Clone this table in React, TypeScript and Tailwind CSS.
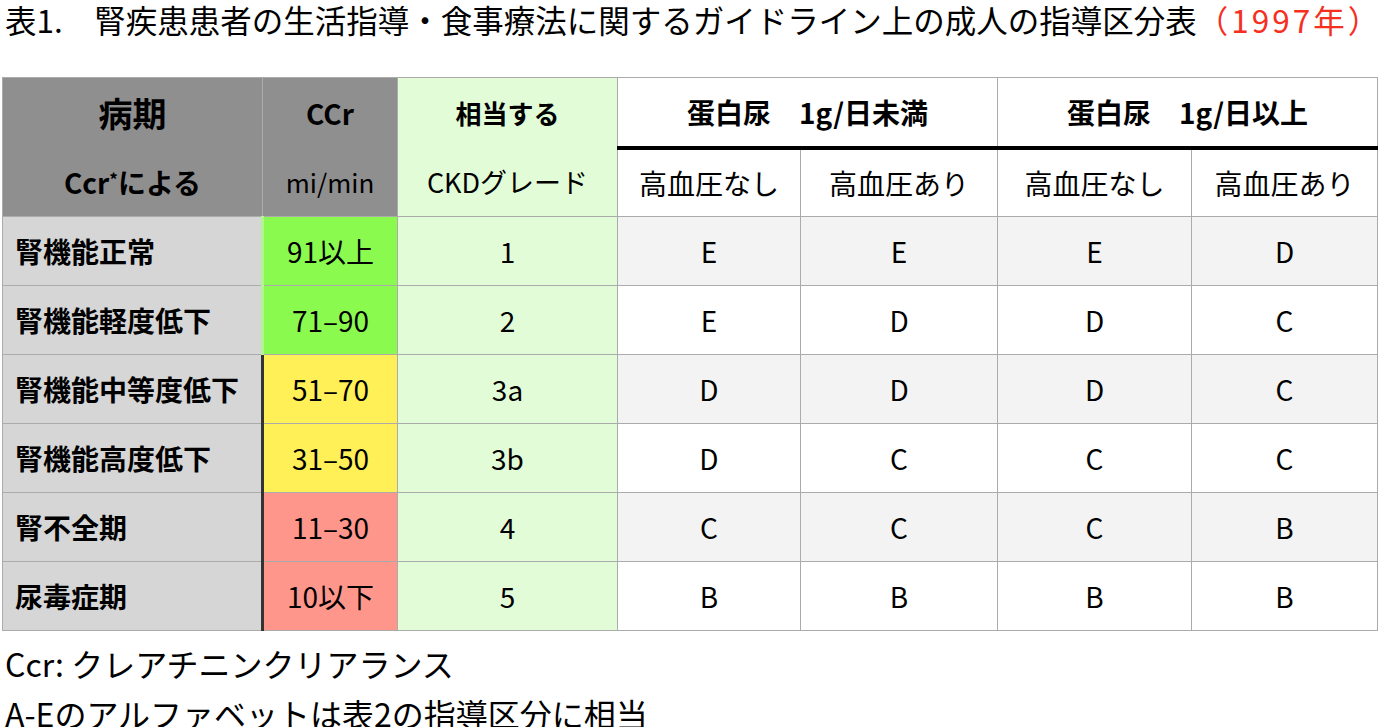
import type { ReactNode } from "react"

// 指導区分の行データ
const rows = [
  { name: "腎機能正常", ccr: "91以上", ckd: "1", grades: ["E", "E", "E", "D"], fill: "bg-[#8bfa4f]", edge: "border-l-[#b2f396]" },
  { name: "腎機能軽度低下", ccr: "71–90", ckd: "2", grades: ["E", "D", "D", "C"], fill: "bg-[#8bfa4f]", edge: "border-l-[#b2f396]" },
  { name: "腎機能中等度低下", ccr: "51–70", ckd: "3a", grades: ["D", "D", "D", "C"], fill: "bg-[#fff057]", edge: "border-l-[#333333]" },
  { name: "腎機能高度低下", ccr: "31–50", ckd: "3b", grades: ["D", "C", "C", "C"], fill: "bg-[#fff057]", edge: "border-l-[#333333]" },
  { name: "腎不全期", ccr: "11–30", ckd: "4", grades: ["C", "C", "C", "B"], fill: "bg-[#ff968b]", edge: "border-l-[#333333]" },
  { name: "尿毒症期", ccr: "10以下", ckd: "5", grades: ["B", "B", "B", "B"], fill: "bg-[#ff968b]", edge: "border-l-[#333333]" },
]

const line = "border border-[#ababab]"

function Cell({ className = "", colSpan, children }: { className?: string; colSpan?: number; children?: ReactNode }) {
  return (
    <td colSpan={colSpan} className={`${line} p-0 text-center align-middle whitespace-nowrap ${className}`}>
      {children}
    </td>
  )
}

export default function App() {
  return (
    <div className="w-[1380px] h-[727px] overflow-hidden bg-white text-black font-['Noto_Sans_CJK_JP',sans-serif]">
      <h1 className="pl-[5px] text-[31.5px] leading-[38px] font-normal whitespace-nowrap">
        表1.　腎疾患患者の生活指導・食事療法に関するガイドライン上の成人の指導区分表
        <span className="text-[#f5301f] tracking-[3px]">（1997年）</span>
      </h1>

      <table className="mt-[39px] ml-[2px] w-[1375px] table-fixed border-collapse text-[28px] leading-none">
        <colgroup>
          <col className="w-[260px]" />
          <col className="w-[135px]" />
          <col className="w-[220px]" />
          <col className="w-[183px]" />
          <col className="w-[197px]" />
          <col className="w-[194px]" />
          <col className="w-[186px]" />
        </colgroup>
        <thead>
          <tr className="h-[70px]">
            <Cell className="border-b-0 bg-[#8f8f8f] text-[34px] font-bold">病期</Cell>
            <Cell className="border-b-0 bg-[#8f8f8f] font-bold">CCr</Cell>
            <Cell className="border-b-0 bg-[#e2fcd8] text-[26px] font-bold">相当する</Cell>
            <Cell colSpan={2} className="border-b-4 border-b-black font-bold">
              蛋白尿　1g/日未満
            </Cell>
            <Cell colSpan={2} className="border-b-4 border-b-black font-bold">
              蛋白尿　1g/日以上
            </Cell>
          </tr>
          <tr className="h-[69px]">
            <Cell className="border-t-0 bg-[#8f8f8f] font-bold">
              Ccr<span className="relative top-[-8px] text-[17px]">*</span>による
            </Cell>
            <Cell className="border-t-0 bg-[#8f8f8f] text-[26px]">mi/min</Cell>
            <Cell className="border-t-0 bg-[#e2fcd8] text-[27px]">CKDグレード</Cell>
            <Cell>高血圧なし</Cell>
            <Cell>高血圧あり</Cell>
            <Cell>高血圧なし</Cell>
            <Cell>高血圧あり</Cell>
          </tr>
        </thead>
        <tbody>
          {rows.map((row, i) => (
            <tr key={row.name} className="h-[69px]">
              <Cell className="bg-[#d6d6d6] pl-[12px] text-left font-bold">{row.name}</Cell>
              <Cell className={`${row.fill} border-l-[3px] ${row.edge}`}>{row.ccr}</Cell>
              <Cell className="bg-[#e2fcd8]">{row.ckd}</Cell>
              {row.grades.map((g, j) => (
                <Cell key={j} className={i % 2 === 0 ? "bg-[#f3f3f3]" : "bg-white"}>
                  {g}
                </Cell>
              ))}
            </tr>
          ))}
        </tbody>
      </table>

      <div className="mt-[7px] pl-[5px] text-[32px] leading-[50px]">
        <p>Ccr: クレアチニンクリアランス</p>
        <p>A-Eのアルファベットは表2の指導区分に相当</p>
      </div>
    </div>
  )
}
